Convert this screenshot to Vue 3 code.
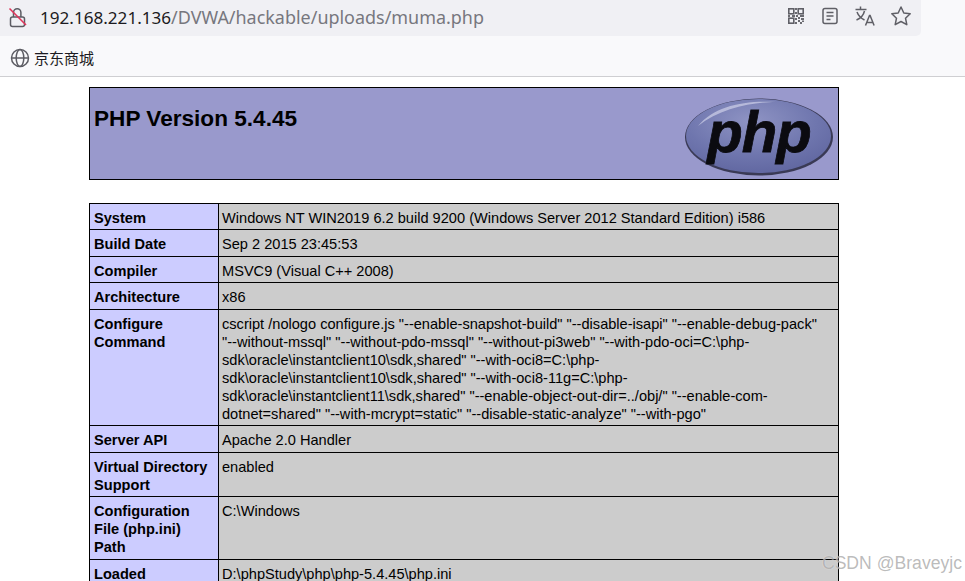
<script setup>
const rows = [
  { k: ['System'], v: ['Windows NT WIN2019 6.2 build 9200 (Windows Server 2012 Standard Edition) i586'] },
  { k: ['Build Date'], v: ['Sep 2 2015 23:45:53'] },
  { k: ['Compiler'], v: ['MSVC9 (Visual C++ 2008)'] },
  { k: ['Architecture'], v: ['x86'] },
  { k: ['Configure', 'Command'], v: [
    'cscript /nologo configure.js "--enable-snapshot-build" "--disable-isapi" "--enable-debug-pack"',
    '"--without-mssql" "--without-pdo-mssql" "--without-pi3web" "--with-pdo-oci=C:\\php-',
    'sdk\\oracle\\instantclient10\\sdk,shared" "--with-oci8=C:\\php-',
    'sdk\\oracle\\instantclient10\\sdk,shared" "--with-oci8-11g=C:\\php-',
    'sdk\\oracle\\instantclient11\\sdk,shared" "--enable-object-out-dir=../obj/" "--enable-com-',
    'dotnet=shared" "--with-mcrypt=static" "--disable-static-analyze" "--with-pgo"'
  ] },
  { k: ['Server API'], v: ['Apache 2.0 Handler'] },
  { k: ['Virtual Directory', 'Support'], v: ['enabled'] },
  { k: ['Configuration', 'File (php.ini)', 'Path'], v: ['C:\\Windows'] },
  { k: ['Loaded'], v: ['D:\\phpStudy\\php\\php-5.4.45\\php.ini'] }
]
</script>

<template>
  <div class="page">
    <header class="chrome">
      <div class="addr">
        <svg class="lock" width="24" height="24" viewBox="0 0 24 24" fill="none">
          <path d="M8.500 12V7.500a3.700 3.700 0 0 1 7.400 0V12" stroke="#5c5c63" stroke-width="1.500"/>
          <rect x="5.500" y="12" width="14" height="9.500" rx="2" stroke="#5c5c63" stroke-width="1.500"/>
          <path d="M4.500 3.500 L21 20" stroke="#e0345a" stroke-width="1.600"/>
        </svg>
        <span class="url"><span class="host">192.168.221.136</span><span class="path">/DVWA/hackable/uploads/muma.php</span></span>
        <div class="tools">
          <svg class="qr" width="20" height="20" viewBox="0 0 20 20">
            <g fill="none" stroke="#5f5f66" stroke-width="1.600">
              <rect x="2.800" y="2.800" width="5" height="5"/>
              <rect x="12.200" y="2.800" width="5" height="5"/>
              <rect x="2.800" y="12.200" width="5" height="5"/>
            </g>
            <g fill="#6a6a70">
              <rect x="9" y="2" width="2" height="2"/><rect x="9" y="6" width="2" height="2"/>
              <rect x="2" y="9" width="2" height="2"/><rect x="6" y="9" width="3" height="2"/>
              <rect x="10" y="9" width="2" height="2"/><rect x="14" y="9" width="4" height="2"/>
              <rect x="9" y="12" width="2" height="2"/><rect x="12" y="11" width="2" height="2"/>
              <rect x="15" y="12" width="3" height="2"/><rect x="9" y="16" width="2" height="2"/>
              <rect x="12" y="14" width="2" height="2"/><rect x="14" y="16" width="2" height="2"/>
              <rect x="16" y="14.500" width="2" height="1.500"/>
            </g>
          </svg>
          <svg class="reader" width="20" height="20" viewBox="0 0 20 20" fill="none" stroke="#5f5f66">
            <rect x="3" y="2.500" width="14" height="15" rx="2" stroke-width="1.500"/>
            <path d="M6.500 6.500h7M6.500 10h7M6.500 13.500h4" stroke-width="1.400"/>
          </svg>
          <svg class="trans" width="22" height="22" viewBox="0 0 22 22" fill="none" stroke="#5f5f66" stroke-width="1.500">
            <path d="M1.500 4.500h11M6.500 1.500v3M3 7c1.500 4 4.500 6.500 7.500 8M10.500 6c-1 4-4 7.500-8 9"/>
            <path d="M11.500 20.500l4-10h.6l4 10M13 17.500h6"/>
          </svg>
          <svg class="star" width="22" height="22" viewBox="0 0 22 22" fill="none" stroke="#5f5f66" stroke-width="1.500" stroke-linejoin="round">
            <path d="M11 2l2.800 6 6.400.8-4.700 4.400 1.300 6.500L11 16.500 5.200 19.700l1.300-6.500L1.800 8.800 8.200 8z"/>
          </svg>
        </div>
      </div>
      <div class="bookmarks">
        <svg class="globe" width="20" height="20" viewBox="0 0 20 20" fill="none" stroke="#5c5c63" stroke-width="1.500">
          <circle cx="10" cy="10" r="8.500"/>
          <ellipse cx="10" cy="10" rx="3.800" ry="8.500"/>
          <path d="M2 10h16"/>
        </svg>
        <span class="bm-text">京东商城</span>
      </div>
    </header>

    <main class="content">
      <div class="banner">
        <h1>PHP Version 5.4.45</h1>
        <svg class="logo" width="150" height="80" viewBox="0 0 150 80">
          <defs>
            <radialGradient id="eg" cx="45%" cy="30%" r="75%">
              <stop offset="0" stop-color="#8f94c4"/>
              <stop offset="0.6" stop-color="#6f76ae"/>
              <stop offset="1" stop-color="#5f659f"/>
            </radialGradient>
          </defs>
          <ellipse cx="75" cy="41" rx="74" ry="38.500" fill="#3a3a55"/>
          <ellipse cx="74.500" cy="40" rx="72.500" ry="37" fill="url(#eg)"/>
          <path d="M14 30C30 10 60 4 92 6 70 6 36 12 14 30z" fill="#c4c7e2" opacity="0.8"/>
          <text x="75" y="56" text-anchor="middle" class="logo-text">php</text>
        </svg>
      </div>

      <table class="info">
        <tbody>
          <tr v-for="r in rows" :key="r.k[0]">
            <td class="e"><div v-for="l in r.k" :key="l">{{ l }}</div></td>
            <td class="v"><div v-for="l in r.v" :key="l">{{ l }}</div></td>
          </tr>
        </tbody>
      </table>
    </main>

    <div class="mark">CSDN @Braveyjc</div>
  </div>
</template>

<style>
html, body { margin: 0; padding: 0; background: #fff; overflow: hidden; }
</style>

<style scoped>
.page {
  position: relative;
  width: 965px;
  height: 581px;
  overflow: hidden;
  background: #fff;
  font-family: "Liberation Sans", Arial, sans-serif;
}
.chrome {
  height: 76px;
  background: #f9f9fb;
  border-bottom: 1px solid #cfcfd2;
}
.addr {
  width: 921px;
  height: 36px;
  box-sizing: border-box;
  background: #f0f0f4;
  border-bottom-right-radius: 5px;
  display: flex;
  align-items: center;
  padding-left: 5px;
}
.lock { margin-top: -3px; }
.url {
  margin-left: 11px;
  font-family: "Noto Sans", sans-serif;
  margin-top: -3px;
  font-size: 17.100px;
}
.host { color: #1c1b22; }
.path { color: #77777e; font-size: 17.950px; }
.tools {
  margin-left: auto;
  display: flex;
  align-items: center;
  gap: 14px;
  padding-right: 9px;
  padding-bottom: 5px;
  box-sizing: border-box;
  height: 100%;
}
.bookmarks {
  height: 40px;
  display: flex;
  align-items: center;
  padding-left: 10px;
  gap: 4px;
}
.globe { margin-top: 3px; }
.bm-text {
  font-family: "Noto Sans CJK SC", sans-serif;
  font-size: 15px;
  color: #1c1b22;
  margin-top: 2px;
}
.content {
  display: flex;
  flex-direction: column;
  width: 750px;
  margin-left: 89px;
  padding-top: 10px;
}
.banner {
  box-sizing: border-box;
  height: 93px;
  background: #9999cc;
  border: 1px solid #000;
  display: flex;
  justify-content: space-between;
  padding: 4px 4px 0 4px;
}
h1 {
  margin: 13px 0 0;
  font-size: 22.600px;
  line-height: 28px;
  font-weight: bold;
  color: #000;
}
.logo { margin-top: 4px; flex: none; }
.logo-text {
  font-family: "Liberation Sans", sans-serif;
  font-weight: bold;
  font-style: italic;
  font-size: 58px;
  letter-spacing: -1px;
  fill: #0b0b10;
  stroke: #0b0b10;
  stroke-width: 0.800px;
}
.info {
  margin-top: 23px;
  width: 750px;
  border-collapse: collapse;
  table-layout: fixed;
  font-size: 14.600px;
  line-height: 18.100px;
  color: #000;
}
td {
  border: 1px solid #000;
  padding: 5px 4px 2.300px;
  vertical-align: baseline;
}
.e {
  box-sizing: border-box;
  width: 129px;
  background: #ccccff;
  font-weight: bold;
  padding-left: 4px;
}
.v {
  background: #cccccc;
  padding-left: 3px;
  white-space: nowrap;
}
.mark {
  position: absolute;
  right: 3px;
  bottom: 7px;
  font-size: 17.600px;
  color: rgba(130, 130, 130, 0.55);
  text-shadow: 0 0 1px rgba(255,255,255,0.8);
}
</style>
